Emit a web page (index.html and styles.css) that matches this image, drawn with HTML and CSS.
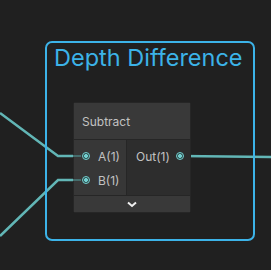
FILE: index.html
```html
<!DOCTYPE html>
<html>
<head>
<meta charset="utf-8">
<link rel="stylesheet" href="styles.css">
</head>
<body>
<div class="canvas">
  <svg class="wires" width="271" height="270" viewBox="0 0 271 270">
    <path d="M0,113 L58,156 L76,156" />
    <path d="M0,236 L58,180 L76,180" />
    <path d="M181,156 L271,157" />
  </svg>
  <div class="group">
    <div class="group-title">Depth Difference</div>
  </div>
  <div class="node">
    <div class="node-header">Subtract</div>
    <div class="node-body">
      <div class="inputs">
        <div class="slot"><span class="port in"></span><span class="label">A(1)</span></div>
        <div class="slot"><span class="port in"></span><span class="label">B(1)</span></div>
      </div>
      <div class="outputs">
        <div class="slot out-slot"><span class="label">Out(1)</span><span class="port"></span></div>
      </div>
    </div>
    <div class="node-footer">
      <svg width="10" height="7" viewBox="0 0 10 7"><path d="M1,1.5 L5,5 L9,1.5" /></svg>
    </div>
  </div>
</div>
</body>
</html>
```
FILE: styles.css
```css
html, body {
  margin: 0;
  padding: 0;
  background: #202020;
}
.canvas {
  position: relative;
  width: 271px;
  height: 270px;
  overflow: hidden;
  background: #202020;
  font-family: Inter, "Noto Sans", sans-serif;
}
.wires {
  position: absolute;
  left: 0;
  top: 0;
}
.wires path {
  fill: none;
  stroke: #62b6b6;
  stroke-width: 2.5;
}
.group {
  position: absolute;
  left: 45px;
  top: 41px;
  width: 210px;
  height: 200px;
  box-sizing: border-box;
  border: 2px solid #3cb3e8;
  border-radius: 7px;
  padding: 1px 0 0 7px;
}
.group-title {
  color: #3cb3e8;
  font-size: 23.5px;
  line-height: 28px;
  white-space: nowrap;
}
.node {
  position: absolute;
  left: 73px;
  top: 102px;
  width: 118px;
  box-sizing: border-box;
  border: 1px solid #262626;
  border-radius: 2px;
  background: #262626;
  display: flex;
  flex-direction: column;
  gap: 1px;
}
.node-header {
  height: 36px;
  background: #393939;
  color: #c2c2c2;
  font-size: 12px;
  display: flex;
  align-items: center;
  padding-left: 8px;
}
.node-body {
  display: grid;
  grid-template-columns: 52px 1fr;
  gap: 1px;
  height: 55px;
}
.inputs {
  background: #373737;
  padding-top: 4px;
}
.outputs {
  background: #2d2d2d;
  padding-top: 4px;
}
.slot {
  height: 24px;
  display: flex;
  align-items: center;
  color: #c2c2c2;
  font-size: 12px;
  position: relative;
}
.inputs .slot {
  padding-left: 8px;
  gap: 8px;
}
.out-slot {
  padding-left: 9px;
  gap: 6px;
}
.port {
  width: 8px;
  height: 8px;
  box-sizing: border-box;
  border: 1.5px solid #72cfcf;
  border-radius: 50%;
  background: radial-gradient(circle, #72cfcf 0 1.8px, #2d4646 2.2px);
  position: relative;
  flex: none;
}
.port.in::before {
  content: "";
  position: absolute;
  left: -10px;
  top: 1.5px;
  width: 8px;
  height: 2px;
  background: #456c6c;
}
.node-footer {
  height: 16px;
  background: #393939;
  display: flex;
  justify-content: center;
  align-items: center;
}
.node-footer svg path {
  fill: none;
  stroke: #f0f0f0;
  stroke-width: 2;
}
```
